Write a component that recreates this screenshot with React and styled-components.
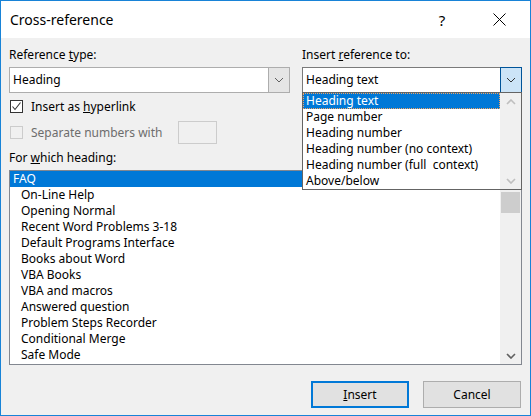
import styled, { createGlobalStyle } from "styled-components";

const GlobalStyle = createGlobalStyle`
    * { box-sizing: border-box; }
    body {
        margin: 0;
        font-family: "Noto Sans", "Segoe UI", sans-serif;
        font-size: 12px;
        color: #000;
    }
`

const Window = styled.div`
    width: 531px;
    height: 416px;
    border: 1px solid #1883d7;
    background-color: #f0f0f0;
    display: flex;
    flex-direction: column;
`

const TitleBar = styled.div`
    height: 37px;
    background-color: #fff;
    display: flex;
    align-items: center;
    padding: 0 10px 0 9px;
    gap: 15px;
`

const Title = styled.div`
    flex: 1;
    font-size: 14px;
`

const TitleButton = styled.div`
    width: 42px;
    height: 37px;
    display: flex;
    align-items: center;
    justify-content: center;
    font-size: 15px;
`

const Body = styled.div`
    flex: 1;
    display: flex;
    flex-direction: column;
    padding: 9px 8px 7px 8px;
`

const TopRow = styled.div`
    display: grid;
    grid-template-columns: 281px 220px;
    column-gap: 12px;
`

const Label = styled.div`
    line-height: 16px;
    margin-top: ${props => props.$mt || 0}px;
    margin-bottom: 4px;
    color: ${props => props.$disabled ? "#6d6d6d" : "#000"};
`

const ComboWrap = styled.div`
    position: relative;
`

const Combo = styled.div`
    height: 26px;
    display: flex;
    border: 1px solid ${props => props.$active ? "#7a7a7a" : "#adadad"};
    background-color: #fff;
`

const ComboField = styled.div`
    flex: 1;
    line-height: 24px;
    padding-left: 3px;
`

const ComboButton = styled.div`
    width: 22px;
    margin: -1px -1px -1px 0;
    display: flex;
    align-items: center;
    justify-content: center;
    background-color: ${props => props.$active ? "#cce4f7" : "#e5e5e5"};
    border: 1px solid ${props => props.$active ? "#005499" : "#adadad"};
`

const DropList = styled.div`
    position: absolute;
    top: 25px;
    left: 0;
    width: 220px;
    height: 98px;
    border: 1px solid #646464;
    background-color: #fff;
    display: flex;
    z-index: 10;
`

const Rows = styled.div`
    flex: 1;
    display: flex;
    flex-direction: column;
`

const DropItem = styled.div`
    height: 16px;
    line-height: 16px;
    padding-left: 3px;
    white-space: pre;
    background-color: ${props => props.$selected ? "#0078d7" : "transparent"};
    color: ${props => props.$selected ? "#fff" : "#000"};
    outline: ${props => props.$selected ? "1px dotted #f4a460" : "none"};
    outline-offset: -1px;
`

const ScrollBar = styled.div`
    width: 21px;
    background-color: #f0f0f0;
    display: flex;
    flex-direction: column;
    align-items: center;
`

const ArrowBox = styled.div`
    height: 17px;
    width: 100%;
    display: flex;
    align-items: center;
    justify-content: center;
`

const Thumb = styled.div`
    width: 19px;
    height: 21px;
    margin-top: 4px;
    margin-right: 1px;
    background-color: #cdcdcd;
`

const Spacer = styled.div`
    flex: 1;
`

const CheckRow = styled.label`
    display: flex;
    align-items: center;
    gap: 8px;
    height: ${props => props.$h}px;
    margin-top: ${props => props.$mt}px;
    padding-left: 1px;
    color: ${props => props.$disabled ? "#6d6d6d" : "#000"};
`

const Box = styled.span`
    width: 13px;
    height: 13px;
    border: 1px solid ${props => props.$disabled ? "#cccccc" : "#333"};
    background-color: ${props => props.$disabled ? "#f0f0f0" : "#fff"};
    display: flex;
    align-items: center;
    justify-content: center;
`

const SmallInput = styled.div`
    width: 39px;
    height: 23px;
    margin-left: 8px;
    border: 1px solid #cccccc;
    background-color: #f0f0f0;
`

const HeadingList = styled.div`
    height: 195px;
    border: 1px solid #828790;
    background-color: #fff;
    display: flex;
`

const HeadingItem = styled.div`
    height: 16px;
    line-height: 16px;
    padding-left: ${props => props.$level ? 11 : 3}px;
    background-color: ${props => props.$selected ? "#0078d7" : "transparent"};
    color: ${props => props.$selected ? "#fff" : "#000"};
`

const ButtonRow = styled.div`
    display: flex;
    justify-content: flex-end;
    gap: 14px;
    margin-top: 16px;
    padding-right: 1px;
`

const Button = styled.button`
    width: 98px;
    height: 27px;
    font-family: inherit;
    font-size: 12px;
    color: #000;
    background-color: #e1e1e1;
    border: 1px solid ${props => props.$default ? "#0078d7" : "#adadad"};
    box-shadow: ${props => props.$default ? "inset 0 0 0 1px #0078d7" : "none"};
    padding: 0;
`

const Chevron = ({ color = "#606060", width = 1, down = true }) => (
    <svg width="10" height="6" viewBox="0 0 10 6">
        <polyline
            points={down ? "1,1 5,5 9,1" : "1,5 5,1 9,5"}
            fill="none"
            stroke={color}
            strokeWidth={width}
        />
    </svg>
)

const refOptions = [
    "Heading text",
    "Page number",
    "Heading number",
    "Heading number (no context)",
    "Heading number (full  context)",
    "Above/below",
]

const headings = [
    "FAQ",
    "On-Line Help",
    "Opening Normal",
    "Recent Word Problems 3-18",
    "Default Programs Interface",
    "Books about Word",
    "VBA Books",
    "VBA and macros",
    "Answered question",
    "Problem Steps Recorder",
    "Conditional Merge",
    "Safe Mode",
]

const App = () => {
    return (
        <>
            <GlobalStyle />
            <Window>
                <TitleBar>
                    <Title>Cross-reference</Title>
                    <TitleButton>?</TitleButton>
                    <TitleButton>
                        <svg width="13" height="13" viewBox="0 0 13 13">
                            <path d="M0.5 0.5 L12.5 12.5 M12.5 0.5 L0.5 12.5" stroke="#000" strokeWidth="1" />
                        </svg>
                    </TitleButton>
                </TitleBar>

                <Body>
                    <TopRow>
                        <div>
                            <Label>Reference <u>t</u>ype:</Label>
                            <Combo>
                                <ComboField>Heading</ComboField>
                                <ComboButton><Chevron /></ComboButton>
                            </Combo>
                        </div>
                        <div>
                            <Label>Insert <u>r</u>eference to:</Label>
                            <ComboWrap>
                                <Combo $active>
                                    <ComboField>Heading text</ComboField>
                                    <ComboButton $active><Chevron color="#333" /></ComboButton>
                                </Combo>
                                <DropList>
                                    <Rows>
                                        {refOptions.map((o, i) => (
                                            <DropItem key={o} $selected={i === 0}>{o}</DropItem>
                                        ))}
                                    </Rows>
                                    <ScrollBar>
                                        <ArrowBox><Chevron color="#bfbfbf" width={1.6} down={false} /></ArrowBox>
                                        <Spacer />
                                        <ArrowBox><Chevron color="#bfbfbf" width={1.6} /></ArrowBox>
                                    </ScrollBar>
                                </DropList>
                            </ComboWrap>
                        </div>
                    </TopRow>

                    <CheckRow $h={16} $mt={5}>
                        <Box>
                            <svg width="11" height="11" viewBox="0 0 11 11">
                                <polyline points="1.5,5.5 4,8.5 9.5,1.5" fill="none" stroke="#333" strokeWidth="1.1" />
                            </svg>
                        </Box>
                        <span>Insert as <u>h</u>yperlink</span>
                    </CheckRow>

                    <CheckRow $h={23} $mt={7} $disabled>
                        <Box $disabled />
                        <span>Separate numbers with</span>
                        <SmallInput />
                    </CheckRow>

                    <Label $mt={6}>For <u>w</u>hich heading:</Label>
                    <HeadingList>
                        <Rows>
                            {headings.map((h, i) => (
                                <HeadingItem key={h} $selected={i === 0} $level={i > 0 ? 1 : 0}>{h}</HeadingItem>
                            ))}
                        </Rows>
                        <ScrollBar>
                            <ArrowBox />
                            <Thumb />
                            <Spacer />
                            <ArrowBox><Chevron color="#606060" width={1.6} /></ArrowBox>
                        </ScrollBar>
                    </HeadingList>

                    <ButtonRow>
                        <Button $default><u>I</u>nsert</Button>
                        <Button>Cancel</Button>
                    </ButtonRow>
                </Body>
            </Window>
        </>
    )
}

export default App;
